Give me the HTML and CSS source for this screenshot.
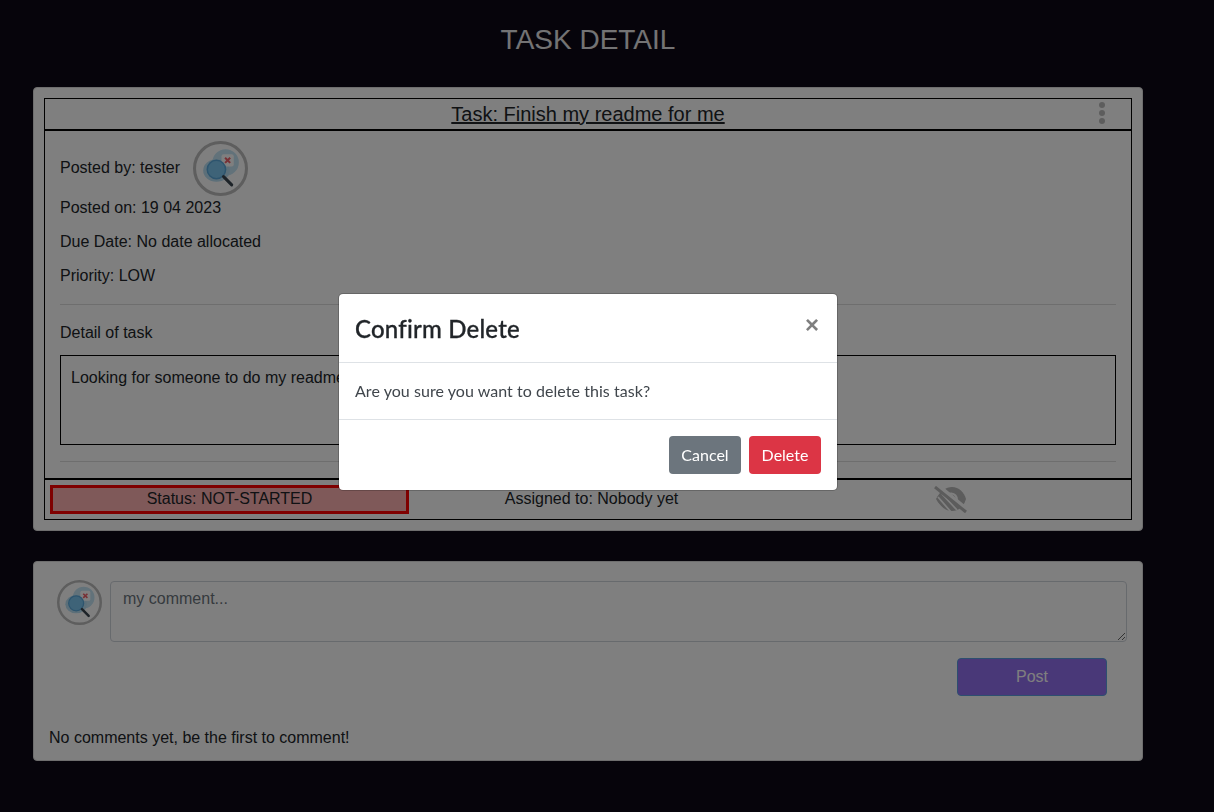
FILE: index.html
```html
<!DOCTYPE html>
<html lang="en">

<head>
    <meta charset="UTF-8">
    <meta name="viewport" content="width=device-width, initial-scale=1.0">
    <title>Task Detail</title>
    <link rel="stylesheet" href="styles.css">
</head>

<body>
    <div class="page">
        <h1 class="pageTitle">TASK DETAIL</h1>

        <div class="card taskCard">
            <div class="taskBox">
                <div class="taskHead">
                    <span class="taskName">Task: Finish my readme for me</span>
                    <span class="dots"><i></i><i></i><i></i></span>
                </div>

                <div class="taskBody">
                    <div class="poster">
                        <span class="posterName">Posted by: tester</span>
                        <svg class="avatar avatarBig" viewBox="0 0 54 54">
                            <use href="#noResult"></use>
                        </svg>
                    </div>
                    <p class="line">Posted on: 19 04 2023</p>
                    <p class="line">Due Date: No date allocated</p>
                    <p class="line">Priority: LOW</p>
                    <hr class="rule">
                    <p class="detailLabel">Detail of task</p>
                    <div class="detailBox">Looking for someone to do my readme for me</div>
                    <hr class="rule ruleLast">
                </div>

                <div class="taskFoot">
                    <div class="status">Status: NOT-STARTED</div>
                    <div class="assigned">Assigned to: Nobody yet</div>
                    <div class="hiddenIcon">
                        <svg width="34" height="28" viewBox="0 0 34 28">
                            <path d="M2 13C6 5 12 1 18 1c7 0 12 5 14 12-2 7-7 12-14 12-7 0-12-5-16-12z" fill="#b8b8b8"></path>
                            <path d="M8 8l15 16M4 11l13 15M2 16l9 10" stroke="#fff" stroke-width="1.8"></path>
                            <path d="M13 9a6 6 0 1 1 8 9" fill="none" stroke="#fff" stroke-width="2"></path>
                            <path d="M4 0l30 25" stroke="#fff" stroke-width="5"></path>
                            <path d="M1 1l31 25" stroke="#b8b8b8" stroke-width="3"></path>
                        </svg>
                    </div>
                </div>
            </div>
        </div>

        <div class="card commentCard">
            <div class="commentRow">
                <svg class="avatar avatarSmall" viewBox="0 0 54 54">
                    <use href="#noResult"></use>
                </svg>
                <textarea class="commentInput" placeholder="my comment..."></textarea>
            </div>
            <div class="postRow">
                <button class="postBtn">Post</button>
            </div>
            <p class="noComments">No comments yet, be the first to comment!</p>
        </div>
    </div>

    <svg class="defs" width="0" height="0">
        <symbol id="noResult" viewBox="0 0 54 54">
            <circle cx="27" cy="27" r="25.5" fill="#fff" stroke="#bcbcbc" stroke-width="3"></circle>
            <ellipse cx="32" cy="21" rx="13" ry="13" fill="#c4e4f5"></ellipse>
            <ellipse cx="23" cy="29" rx="13" ry="11" fill="#b9dff3"></ellipse>
            <rect x="28" y="13" width="12" height="12" rx="2" fill="#fff"></rect>
            <path d="M31.5 16.5l5 5M36.5 16.5l-5 5" stroke="#f0606a" stroke-width="2"></path>
            <circle cx="23" cy="28" r="9" fill="#7cc6f0" stroke="#5aa9dc" stroke-width="1.5"></circle>
            <path d="M30 35l8 8" stroke="#3a4650" stroke-width="3" stroke-linecap="round"></path>
        </symbol>
    </svg>

    <div class="backdrop"></div>
    <div class="modalWrap">
        <div class="modal">
            <div class="modalHead">
                <h2 class="modalTitle">Confirm Delete</h2>
                <span class="closeX">&times;</span>
            </div>
            <div class="modalBody">Are you sure you want to delete this task?</div>
            <div class="modalFoot">
                <button class="btn btnGrey">Cancel</button>
                <button class="btn btnRed">Delete</button>
            </div>
        </div>
    </div>
</body>

</html>
```

FILE: styles.css
```css
* {
    box-sizing: border-box;
}

body {
    margin: 0;
    background-color: #0c0816;
    font-family: "Liberation Sans", Arial, sans-serif;
    font-size: 16px;
    color: #212529;
}

.page {
    width: 1176px;
    height: 812px;
    padding: 0 33px;
    overflow: hidden;
}

.pageTitle {
    margin: 24px 0 31px;
    height: 32px;
    line-height: 32px;
    text-align: center;
    font-size: 28px;
    font-weight: 400;
    color: #fff;
    opacity: .9;
}

.card {
    width: 1110px;
    background-color: #fff;
    border: 1px solid #dcdcdc;
    border-radius: 4px;
}

.taskCard {
    height: 444px;
    padding: 10px;
    margin-bottom: 30px;
}

.taskBox {
    height: 422px;
    border: 1px solid #000;
    display: flex;
    flex-direction: column;
}

.taskHead {
    position: relative;
    height: 32px;
    border-bottom: 2px solid #000;
    text-align: center;
    font-size: 20px;
    line-height: 30px;
}

.taskName {
    text-decoration: underline;
}

.dots {
    position: absolute;
    right: 26px;
    top: 3px;
    display: flex;
    flex-direction: column;
    gap: 2px;
}

.dots i {
    width: 6px;
    height: 6px;
    border-radius: 50%;
    background-color: #bbb;
}

.taskBody {
    flex: 1;
    padding: 10px 15px 0;
}

.poster {
    display: flex;
    align-items: flex-start;
    gap: 13px;
    height: 50px;
}

.posterName {
    margin-top: 17px;
    line-height: 20px;
}

.avatar {
    display: block;
    flex: none;
}

.avatarBig {
    width: 55px;
    height: 55px;
}

.avatarSmall {
    width: 45px;
    height: 45px;
    margin-top: -1px;
}

.defs {
    position: absolute;
}

.line {
    margin: 0;
    height: 34px;
    line-height: 34px;
}

.rule {
    margin: 11px 0 0;
    border: 0;
    border-top: 1px solid #ddd;
}

.detailLabel {
    margin: 18px 0 12px;
    line-height: 20px;
}

.detailBox {
    height: 90px;
    border: 1px solid #000;
    padding: 12px 10px;
    line-height: 20px;
}

.ruleLast {
    margin-top: 16px;
}

.taskFoot {
    height: 41px;
    border-top: 2px solid #000;
    display: flex;
    align-items: center;
    padding: 0 5px;
}

.status {
    width: 359px;
    height: 29px;
    border: 3px solid #f00;
    background-color: #ffb3b3;
    text-align: center;
    line-height: 22px;
}

.assigned {
    width: 365px;
    padding-bottom: 2px;
    text-align: center;
}

.hiddenIcon {
    width: 352px;
    padding-left: 2px;
    display: flex;
    justify-content: center;
}

.commentCard {
    height: 200px;
    padding: 19px 15px 0;
}

.commentRow {
    display: flex;
    gap: 8px;
    padding-left: 8px;
}

.commentInput {
    flex: 1;
    height: 61px;
    border: 1px solid #ced4da;
    border-radius: 4px;
    padding: 8px 12px;
    font-family: "Liberation Sans", Arial, sans-serif;
    font-size: 16px;
    background-color: #fff;
}

.commentInput::placeholder {
    color: #6c757d;
}

.postRow {
    display: flex;
    justify-content: flex-end;
    padding: 16px 20px 0 0;
}

.postBtn {
    width: 150px;
    height: 38px;
    border: 1px solid #5a9fe0;
    border-radius: 4px;
    background-color: #9370f0;
    color: #fff;
    font-family: "Liberation Sans", Arial, sans-serif;
    font-size: 16px;
}

.noComments {
    margin: 32px 0 0;
    line-height: 20px;
}

.backdrop {
    position: fixed;
    inset: 0;
    background-color: #000;
    opacity: .5;
}

.modalWrap {
    position: fixed;
    top: 293px;
    left: 338px;
    width: 500px;
}

.modal {
    background-color: #fff;
    background-clip: padding-box;
    border: 1px solid rgba(0, 0, 0, .2);
    border-radius: 5px;
    font-family: Lato, sans-serif;
}

.modalHead {
    display: flex;
    justify-content: space-between;
    align-items: flex-start;
    height: 69px;
    padding: 18px 18px 16px 16px;
    border-bottom: 1px solid #dee2e6;
}

.modalTitle {
    margin: 0;
    font-size: 24px;
    font-weight: 500;
    line-height: 34px;
    letter-spacing: .2px;
    -webkit-text-stroke: .3px #212529;
    color: #212529;
}

.closeX {
    margin-top: -2px;
    font-family: "Liberation Sans", Arial, sans-serif;
    font-size: 24px;
    font-weight: 700;
    line-height: 30px;
    color: #7f7f7f;
}

.modalBody {
    height: 56px;
    padding: 16px;
    line-height: 24px;
    letter-spacing: .05px;
    color: #40464c;
}

.modalFoot {
    display: flex;
    justify-content: flex-end;
    gap: 8px;
    height: 71px;
    padding: 16px;
    border-top: 1px solid #dee2e6;
}

.btn {
    width: 72px;
    height: 38px;
    padding: 0 0 2px;
    border: 0;
    border-radius: 4px;
    color: #fff;
    font-family: Lato, sans-serif;
    font-size: 16px;
}

.btnGrey {
    background-color: #6c757d;
}

.btnRed {
    background-color: #dc3545;
}
```
